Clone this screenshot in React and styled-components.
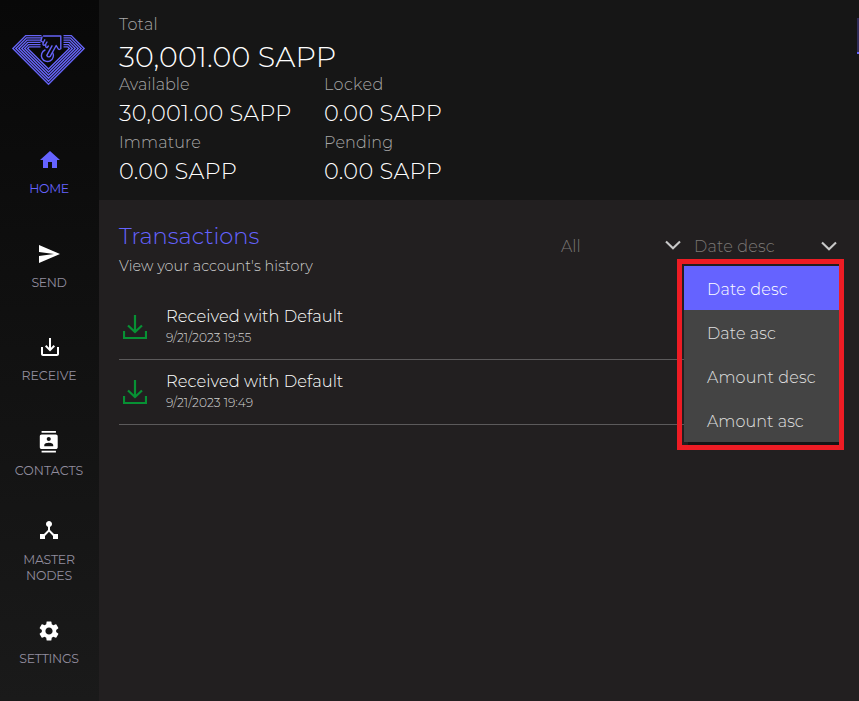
import React from "react";
import styled, { createGlobalStyle } from "styled-components";
import {
  MdHome,
  MdSend,
  MdSaveAlt,
  MdContacts,
  MdDeviceHub,
  MdSettings,
} from "react-icons/md";

const GlobalStyle = createGlobalStyle`
  * { box-sizing: border-box; }
  body {
    margin: 0;
    background: #221f20;
    font-family: Montserrat, Inter, sans-serif;
    font-weight: 300;
    overflow: hidden;
  }
`;

const Page = styled.div`
  display: flex;
  width: 859px;
  height: 701px;
`;

const Sidebar = styled.nav`
  display: flex;
  flex-direction: column;
  align-items: center;
  width: 99px;
  padding-top: 33px;
  background: linear-gradient(#080808, #1a1a1a);
`;

const LogoSvg = styled.svg`
  display: block;
  width: 77px;
  height: 54px;
  margin: 0 2px 40px 0;
  stroke: #6563f6;
  stroke-width: 1.45;
  fill: none;
`;

const NavItem = styled.a`
  display: flex;
  flex-direction: column;
  align-items: center;
  width: 99px;
  height: ${(p) => p.$height || 94}px;
  padding-top: ${(p) => p.$top || 21}px;
  color: ${(p) => (p.$active ? "#6563ff" : "#ffffff")};

  svg {
    display: block;
    flex: none;
    margin-left: ${(p) => p.$nudge || 0}px;
  }
`;

const NavLabel = styled.span`
  width: 78px;
  margin-top: ${(p) => p.$gap || 9}px;
  padding-right: 1px;
  color: ${(p) => (p.$active ? "#6563ff" : "#918d9e")};
  font-size: 12.5px;
  font-weight: 400;
  line-height: 16px;
  letter-spacing: ${(p) => p.$ls || 0}px;
  text-align: center;
  white-space: nowrap;
`;

const LabelLine = styled.span`
  display: block;
`;

const Content = styled.main`
  display: flex;
  flex: 1;
  flex-direction: column;
`;

const Balances = styled.header`
  display: flex;
  justify-content: space-between;
  height: 200px;
  padding: 14px 0 0 20px;
  background: #161616;
`;

const SideHandle = styled.div`
  width: 2px;
  height: 36px;
  margin-top: 4px;
  background: #302c58;
  border-bottom: 2px solid #6563ff;
`;

const BalanceLabel = styled.div`
  color: #a8a8a8;
  font-size: 16px;
  line-height: ${(p) => p.$line || 18}px;
  letter-spacing: ${(p) => p.$ls || 0}px;
`;

const TotalAmount = styled.div`
  height: 38px;
  margin-top: 3px;
  color: #ffffff;
  font-size: 28.5px;
  line-height: 37px;
  letter-spacing: 0.12px;
`;

const BalanceGrid = styled.div`
  display: grid;
  grid-template-columns: 205px 205px;
  row-gap: 6px;
`;

const Amount = styled.div`
  margin-top: 4px;
  color: #ffffff;
  font-size: 22.5px;
  line-height: 30px;
  letter-spacing: ${(p) => p.$ls}px;
`;

const Transactions = styled.section`
  padding: 20px 20px 0;
`;

const Toolbar = styled.div`
  display: flex;
  justify-content: space-between;
  height: 74px;
`;

const Title = styled.h1`
  margin: 0;
  color: #6563ff;
  font-size: 22.6px;
  font-weight: 300;
  line-height: 32px;
`;

const Subtitle = styled.p`
  margin: 4px 0 0;
  color: #cccccc;
  font-size: 14.4px;
  line-height: 20px;
  letter-spacing: 0.05px;
`;

const Filters = styled.div`
  display: flex;
  gap: 13px;
  padding: 15px 2px 0 0;
`;

const Select = styled.div`
  position: relative;
  display: flex;
  align-items: center;
  justify-content: space-between;
  width: ${(p) => p.$width}px;
  height: 22px;
  color: #7c7876;
  font-size: 16px;
  letter-spacing: ${(p) => p.$ls || 0}px;
`;

const ChevronSvg = styled.svg`
  width: 16px;
  height: 10px;
  margin-top: ${(p) => p.$top || 0}px;
  stroke: #c8c8c8;
  stroke-width: 2.1;
  fill: none;
`;

const MenuFrame = styled.div`
  position: absolute;
  top: 24px;
  left: -17px;
  width: 167px;
  height: 191px;
  padding: 2px 0 3px 2px;
  border: 5px solid #ed1c24;
`;

const Menu = styled.ul`
  margin: 0;
  padding: 0;
  list-style: none;
  background: #444444;
  box-shadow: 4px 3px 0 #151415;
  clip-path: inset(0 0 -3px 0);
`;

const MenuItem = styled.li`
  height: 44px;
  padding-left: 23px;
  background: ${(p) => (p.$selected ? "#6563ff" : "transparent")};
  color: ${(p) => (p.$selected ? "#ffffff" : "#e0e0e0")};
  font-size: 16px;
  line-height: 47px;
  letter-spacing: ${(p) => p.$ls}px;
`;

const Row = styled.article`
  display: flex;
  height: ${(p) => p.$height}px;
  padding: ${(p) => p.$top}px 0 0 4px;
  border-bottom: 1px solid #5c5a5b;
`;

const ReceivedSvg = styled.svg`
  width: 24px;
  height: 26px;
  margin: 9px 19px 0 0;
  stroke: #079134;
  stroke-width: 2.2;
  fill: none;
`;

const RowTitle = styled.div`
  color: #ffffff;
  font-size: 16.3px;
  line-height: 22px;
  letter-spacing: 0.04px;
`;

const RowDate = styled.div`
  color: #d0d0d0;
  font-size: 12.2px;
  line-height: 21px;
`;

const RINGS = [0, 1, 2, 3, 4, 5];

function Logo() {
  return (
    <LogoSvg viewBox="10 33 77 54">
      {RINGS.map((i) => {
        const y = 35.6 + 2.25 * i;
        const inner = 12.9 + 2.95 * i;
        const corner = inner + 48.4 - y;
        return (
          <path
            key={i}
            d={`M${41.5 - (i > 2 ? 1 : 0)} ${y}H${corner}L${inner} 48.4L48.5 ${84.2 - 3.05 * i}L${97 - inner} 48.4L${97 - corner} ${y}H63.5`}
          />
        );
      })}
      <g strokeLinecap="round" strokeLinejoin="round" strokeWidth="1.4">
        <path d="M43.5 36H60.8V48.8Q58.8 50.2 58 48.5L56.2 45.5L50.2 56.4Q48 57.8 46.8 55.4L52 45.8" />
        <path d="M42 37L40.8 41L43.4 42.5Q42.3 45 44 45.3Q45.8 45 45.8 44Q45.2 47.8 47.2 47.6L48.3 46M43.4 42.5L44.8 39.8M45.8 44L47 42" />
        <path d="M45 50A6 6 0 1 0 52.6 52.5" />
      </g>
    </LogoSvg>
  );
}

function Chevron({ top }) {
  return (
    <ChevronSvg $top={top} viewBox="0 0 16 10">
      <path d="M1 1.5L8 8.2L15 1.5" />
    </ChevronSvg>
  );
}

function Transaction({ date, height, top }) {
  return (
    <Row $height={height} $top={top}>
      <ReceivedSvg viewBox="0 0 24 26">
        <path d="M12 1V18M5 11.5L12 18L19 11.5M1 17V24H23V17" />
      </ReceivedSvg>
      <div>
        <RowTitle>Received with Default</RowTitle>
        <RowDate>{date}</RowDate>
      </div>
    </Row>
  );
}

export default function App() {
  return (
    <Page>
      <GlobalStyle />
      <Sidebar>
        <Logo />
        <NavItem $active $nudge={1}>
          <MdHome size={24} />
          <NavLabel $active $ls={-0.4}>HOME</NavLabel>
        </NavItem>
        <NavItem $nudge={-1}>
          <MdSend size={24} />
          <NavLabel $ls={-0.4}>SEND</NavLabel>
        </NavItem>
        <NavItem $nudge={1} $top={20} $gap={10}>
          <MdSaveAlt size={24} />
          <NavLabel>RECEIVE</NavLabel>
        </NavItem>
        <NavItem $top={22} $nudge={-2}>
          <MdContacts size={21.5} />
          <NavLabel $ls={0.05} $gap={10}>CONTACTS</NavLabel>
        </NavItem>
        <NavItem $height={95} $top={15} $nudge={-1}>
          <MdDeviceHub size={24} />
          <NavLabel $ls={-0.25} $gap={10}>
            <LabelLine>MASTER</LabelLine>
            <LabelLine>NODES</LabelLine>
          </NavLabel>
        </NavItem>
        <NavItem $nudge={-1}>
          <MdSettings size={24} />
          <NavLabel $ls={-0.3} $gap={8}>SETTINGS</NavLabel>
        </NavItem>
      </Sidebar>
      <Content>
        <Balances>
          <div>
            <BalanceLabel $line={21} $ls={0.27}>Total</BalanceLabel>
            <TotalAmount>30,001.00 SAPP</TotalAmount>
            <BalanceGrid>
              <div>
                <BalanceLabel>Available</BalanceLabel>
                <Amount $ls={0.18}>30,001.00 SAPP</Amount>
              </div>
              <div>
                <BalanceLabel $ls={0.4}>Locked</BalanceLabel>
                <Amount $ls={0.25}>0.00 SAPP</Amount>
              </div>
              <div>
                <BalanceLabel $ls={0.15}>Immature</BalanceLabel>
                <Amount $ls={0.25}>0.00 SAPP</Amount>
              </div>
              <div>
                <BalanceLabel $ls={0.15}>Pending</BalanceLabel>
                <Amount $ls={0.25}>0.00 SAPP</Amount>
              </div>
            </BalanceGrid>
          </div>
          <SideHandle />
        </Balances>
        <Transactions>
          <Toolbar>
            <div>
              <Title>Transactions</Title>
              <Subtitle>View your account's history</Subtitle>
            </div>
            <Filters>
              <Select $width={120}>
                All
                <Chevron top={-2} />
              </Select>
              <Select $width={143} $ls={0.2}>
                Date desc
                <Chevron />
                <MenuFrame>
                  <Menu>
                    <MenuItem $selected $ls={0.2}>Date desc</MenuItem>
                    <MenuItem $ls={0.1}>Date asc</MenuItem>
                    <MenuItem $ls={0.16}>Amount desc</MenuItem>
                    <MenuItem $ls={0.08}>Amount asc</MenuItem>
                  </Menu>
                </MenuFrame>
              </Select>
            </Filters>
          </Toolbar>
          <Transaction date="9/21/2023 19:55" height={66} top={11} />
          <Transaction date="9/21/2023 19:49" height={65} top={10} />
        </Transactions>
      </Content>
    </Page>
  );
}
